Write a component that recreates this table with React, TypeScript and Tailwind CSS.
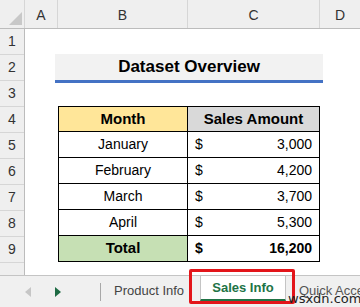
import React from "react";

const rows = [
  { month: "January", amount: "3,000" },
  { month: "February", amount: "4,200" },
  { month: "March", amount: "3,700" },
  { month: "April", amount: "5,300" },
];

const cols = "grid grid-cols-[33px_130px_132px_1fr]";

export default function App() {
  return (
    <div className="w-[360px] h-[307px] bg-white overflow-hidden relative font-['Liberation_Sans',sans-serif] text-[14px] text-black">
      {/* Column headers */}
      <div className="flex h-[29px] bg-[#efefef] border-b border-[#bcbcbc]">
        <div className="w-[25px] border-r border-[#d6d6d6] flex items-end justify-end pr-[2px] pb-[3px]">
          <div className="w-0 h-0 border-l-[13px] border-l-transparent border-b-[13px] border-b-[#c8c8c8]" />
        </div>
        <div className={`${cols} flex-1 text-[#333]`}>
          <div className="border-r border-[#d6d6d6] flex items-center justify-center pt-[2px]">A</div>
          <div className="border-r border-[#d6d6d6] flex items-center justify-center pt-[2px]">B</div>
          <div className="border-r border-[#d6d6d6] flex items-center justify-center pt-[2px]">C</div>
          <div className="flex items-center justify-center pt-[2px]">D</div>
        </div>
      </div>

      <div className="flex h-[246px]">
        {/* Row headers */}
        <div className="w-[25px] bg-[#efefef] border-r border-[#bcbcbc] text-[#333] flex flex-col">
          {[1, 2, 3, 4, 5, 6, 7, 8, 9].map((n) => (
            <div key={n} className="h-[26px] shrink-0 border-b border-[#d6d6d6] flex items-center justify-center">
              {n}
            </div>
          ))}
        </div>

        {/* Sheet area */}
        <div className="flex-1 flex flex-col">
          <div className="h-[25px]" />
          {/* Title row */}
          <div className={`${cols} h-[26px]`}>
            <div />
            <div className="col-span-2 -ml-[3px] -mr-[3px] bg-[#f2f2f2] border-b-[3px] border-[#4472c4] flex items-center justify-center font-bold text-[17px]">
              Dataset Overview
            </div>
          </div>
          <div className="h-[26px]" />
          {/* Table header */}
          <div className={`${cols} h-[26px]`}>
            <div />
            <div className="bg-[#ffe699] border border-black flex items-center justify-center font-bold text-[15px]">
              Month
            </div>
            <div className="bg-[#d9d9d9] border-y border-r border-black flex items-center justify-center font-bold text-[15px]">
              Sales Amount
            </div>
          </div>
          {rows.map((r) => (
            <div key={r.month} className={`${cols} h-[26px]`}>
              <div />
              <div className="border-x border-b border-black flex items-center justify-center">{r.month}</div>
              <div className="border-r border-b border-black flex items-center justify-between px-[7px]">
                <span>$</span>
                <span>{r.amount}</span>
              </div>
            </div>
          ))}
          <div className={`${cols} h-[26px]`}>
            <div />
            <div className="bg-[#c6e0b4] border-x border-b border-black flex items-center justify-center font-bold text-[15px]">
              Total
            </div>
            <div className="border-r border-b border-black flex items-center justify-between px-[7px] font-bold">
              <span>$</span>
              <span>16,200</span>
            </div>
          </div>
        </div>
      </div>

      {/* Sheet tabs */}
      <div className="h-[32px] bg-[#f0f0f0] border-t border-[#c4c4c4] flex items-center text-[13px] text-[#444]">
        <div className="w-[100px] shrink-0 h-full flex items-center">
          <div className="ml-[25px] w-0 h-0 border-y-[5px] border-y-transparent border-r-[6px] border-r-[#c6c6c6]" />
          <div className="ml-[24px] w-0 h-0 border-y-[5px] border-y-transparent border-l-[6px] border-l-[#1e6b44]" />
        </div>
        <div className="w-px shrink-0 h-[18px] bg-[#a8a8a8]" />
        <div className="w-[99px] shrink-0 pl-[13px] pb-[2px] whitespace-nowrap">Product Info</div>
        <div className="w-[86px] shrink-0 h-[25px] self-start bg-white border-x border-[#c4c4c4] border-b-2 border-b-[#217346] flex items-center justify-center font-bold text-[#217346]">
          Sales Info
        </div>
        <div className="shrink-0 pl-[13px] pb-[2px] whitespace-nowrap text-[#555]">Quick Access</div>
      </div>

      {/* Highlight box */}
      <div className="absolute left-[189px] top-[269px] w-[106px] h-[35px] border-[3px] border-[#e3151a] rounded-[2px]" />

      {/* Watermark */}
      <div className="absolute left-[288px] top-[292px] text-[13px] text-[#222] leading-none font-['DejaVu_Sans',sans-serif]">
        wsxdn.com
      </div>
    </div>
  );
}
